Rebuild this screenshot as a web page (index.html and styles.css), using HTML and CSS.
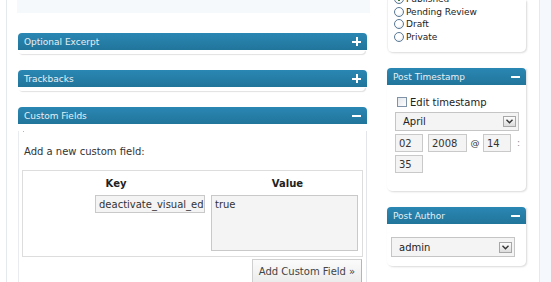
FILE: index.html
```html
<!doctype html>
<html lang="en">
    <head>
        <meta charset="UTF-8" />
        <meta name="viewport" content="width=device-width, initial-scale=1.0" />
        <title>Edit Post</title>
        <link rel="stylesheet" href="styles.css">
    </head>
    <body>
        <div class="page">
            <div class="wrap">
                <div class="main-col">
                    <div class="editor-tail"></div>

                    <div class="postbox closed">
                        <div class="hndle"><span>Optional Excerpt</span><span class="toggle plus"></span></div>
                        <div class="inside"></div>
                    </div>

                    <div class="postbox closed">
                        <div class="hndle"><span>Trackbacks</span><span class="toggle plus"></span></div>
                        <div class="inside"></div>
                    </div>

                    <div class="postbox open custom-fields">
                        <div class="hndle"><span>Custom Fields</span><span class="toggle minus"></span></div>
                        <div class="inside">
                            <div class="ajax-dot"></div>
                            <p class="add-title">Add a new custom field:</p>
                            <div class="newmeta">
                                <div class="meta-head">
                                    <span class="col-key">Key</span>
                                    <span class="col-value">Value</span>
                                </div>
                                <div class="meta-row">
                                    <div class="metakey">deactivate_visual_editor</div>
                                    <textarea class="metavalue">true</textarea>
                                </div>
                            </div>
                            <div class="submit-row">
                                <button class="button">Add Custom Field &raquo;</button>
                            </div>
                        </div>
                    </div>
                </div>

                <div class="side-col">
                    <div class="sidebox status-box">
                        <ul class="status-list">
                            <li><label><input type="radio" name="status" checked /> Published</label></li>
                            <li><label><input type="radio" name="status" /> Pending Review</label></li>
                            <li><label><input type="radio" name="status" /> Draft</label></li>
                            <li><label><input type="radio" name="status" /> Private</label></li>
                        </ul>
                    </div>

                    <div class="sidebox timestamp-box">
                        <div class="hndle"><span>Post Timestamp</span><span class="toggle minus"></span></div>
                        <div class="inside">
                            <label class="edit-ts"><input type="checkbox" /> Edit timestamp</label>
                            <div class="fake-select wide">
                                <span>April</span>
                                <span class="select-arrow"><svg width="7" height="5" viewBox="0 0 7 5"><path d="M0.5 0.8 L3.5 3.8 L6.5 0.8" fill="none" stroke="#333" stroke-width="1.4"/></svg></span>
                            </div>
                            <div class="ts-row">
                                <input class="ts-input" type="text" value="02" />
                                <input class="ts-input year" type="text" value="2008" />
                                <span class="ts-sep">@</span>
                                <input class="ts-input" type="text" value="14" />
                                <span class="ts-sep colon">:</span>
                            </div>
                            <div class="ts-row">
                                <input class="ts-input" type="text" value="35" />
                            </div>
                        </div>
                    </div>

                    <div class="sidebox author-box">
                        <div class="hndle"><span>Post Author</span><span class="toggle minus"></span></div>
                        <div class="inside">
                            <div class="fake-select">
                                <span>admin</span>
                                <span class="select-arrow"><svg width="7" height="5" viewBox="0 0 7 5"><path d="M0.5 0.8 L3.5 3.8 L6.5 0.8" fill="none" stroke="#333" stroke-width="1.4"/></svg></span>
                            </div>
                        </div>
                    </div>
                </div>
            </div>
            <div class="right-strip"></div>
        </div>
    </body>
</html>
```

FILE: styles.css
```css
body {
    font-family: "DejaVu Sans", Verdana, sans-serif;
    font-size: 10px;
    color: #333;
    margin: 0;
    padding: 0;
    background-color: #fff;
    overflow: hidden;
}

.page {
    display: flex;
    height: 282px;
    overflow: hidden;
}

.wrap {
    display: flex;
    width: 533px;
    margin-left: 6px;
    border-left: 1px solid #e4e9ee;
    padding-left: 11px;
    box-sizing: border-box;
}

.right-strip {
    flex: 1;
    border-left: 1px solid #e4e9ee;
    background-color: #f5f9fd;
}

/* main column */
.main-col {
    width: 349px;
}

.editor-tail {
    height: 13px;
    margin-left: -1px;
    width: 353px;
    background-color: #f5f9fc;
    margin-bottom: 20px;
}

.hndle {
    display: flex;
    align-items: center;
    justify-content: space-between;
    height: 17px;
    padding: 0 5px 0 6px;
    border-radius: 4px 4px 0 0;
    background: linear-gradient(#2a87b3, #21759b);
    color: #e6f0f6;
    font-size: 9px;
    box-sizing: border-box;
}

.toggle {
    position: relative;
    width: 9px;
    height: 9px;
    margin-right: 1px;
}

.toggle::before,
.toggle.plus::after {
    content: "";
    position: absolute;
    background-color: #fff;
}

.toggle::before {
    left: 0;
    top: 4px;
    width: 9px;
    height: 2px;
}

.toggle.plus::after {
    left: 4px;
    top: 0;
    width: 2px;
    height: 9px;
}

.postbox {
    margin-bottom: 16px;
}

.postbox.closed .inside {
    height: 4px;
    border-radius: 0 0 5px 5px;
    box-shadow: 1px 1px 1px rgba(0, 0, 0, 0.12);
    margin-right: 2px;
}

.postbox.closed + .postbox.open {
    margin-top: 1px;
}

.custom-fields .inside {
    border-left: 1px solid #e8ecef;
    border-right: 1px solid #e2e6ea;
    height: 200px;
    padding: 0 3px;
}

.ajax-dot {
    width: 1px;
    height: 1px;
    margin: 7px 0 0 1px;
    background-color: #b5b5b5;
}

.add-title {
    margin: 14px 0 0 2px;
    font-size: 10px;
    line-height: 12px;
    color: #333;
}

.newmeta {
    margin-top: 12px;
    border: 1px solid #dddddd;
    height: 87px;
    box-sizing: border-box;
}

.meta-head {
    display: flex;
    height: 24px;
    align-items: center;
    font-weight: bold;
    color: #222;
}

.col-key {
    width: 186px;
    text-align: center;
}

.col-value {
    flex: 1;
    text-align: center;
    padding-left: 4px;
}

.meta-row {
    display: flex;
    align-items: flex-start;
    padding-left: 72px;
}

.metakey,
.metavalue,
.ts-input {
    font-family: "DejaVu Sans", Verdana, sans-serif;
    font-size: 10px;
    line-height: 14px;
    color: #333;
    background-color: #f4f4f4;
    border: 1px solid #c9c9c9;
    box-sizing: border-box;
    margin: 0;
    outline: none;
}

.metakey {
    width: 110px;
    height: 18px;
    padding: 1px 3px;
    line-height: 15px;
    white-space: nowrap;
    overflow: hidden;
}

.metavalue {
    width: 147px;
    height: 56px;
    margin-left: 6px;
    padding: 2px 3px;
    resize: none;
}

.submit-row {
    display: flex;
    justify-content: flex-end;
    margin-top: 2px;
    padding-right: 1px;
}

.button {
    font-family: "DejaVu Sans", Verdana, sans-serif;
    font-size: 10px;
    color: #444;
    width: 110px;
    height: 24px;
    padding: 0;
    border: 1px solid #cfcfcf;
    border-right-color: #b5b5b5;
    border-bottom-color: #b5b5b5;
    background: linear-gradient(#fbfbfb, #ececec);
}

/* sidebar */
.side-col {
    width: 139px;
    margin-left: 20px;
}

.sidebox {
    border-radius: 0 0 5px 5px;
    box-shadow: 1px 1px 2px rgba(0, 0, 0, 0.15);
    margin-bottom: 16px;
}

.status-box {
    height: 52px;
    border-left: 1px solid #eef0f2;
    box-sizing: border-box;
}

.status-list {
    list-style: none;
    margin: 0;
    padding: 0 0 0 6px;
    position: relative;
    top: -7px;
}

.status-list li {
    height: 12.6px;
    line-height: 12px;
    font-size: 9px;
    color: #222;
}

.status-list label,
.edit-ts {
    display: flex;
    align-items: center;
}

input[type="radio"] {
    appearance: none;
    width: 10px;
    height: 10px;
    margin: 0 2px 0 0;
    border: 1px solid #5a7894;
    border-radius: 50%;
    background: radial-gradient(circle at 40% 35%, #fff 40%, #d8e2ea);
    box-sizing: border-box;
}

input[type="radio"]:checked {
    background: radial-gradient(circle, #3d7b2f 30%, #fff 35%, #dfe7ee);
}

input[type="checkbox"] {
    appearance: none;
    width: 10px;
    height: 10px;
    margin: 0 3px 0 0;
    border: 1px solid #7f93a8;
    background: linear-gradient(135deg, #e2e7ec, #fdfdfd);
    box-sizing: border-box;
}

.timestamp-box .inside {
    height: 106px;
    padding: 12px 0 0 8px;
    box-sizing: border-box;
}

.edit-ts {
    font-size: 10px;
    color: #222;
    margin-left: 2px;
    height: 10px;
}

.fake-select {
    display: flex;
    align-items: center;
    justify-content: space-between;
    width: 124px;
    height: 19px;
    margin-top: 5px;
    padding: 0 2px 0 7px;
    border: 1px solid #c5c5c5;
    background-color: #f4f4f4;
    box-sizing: border-box;
    color: #222;
}

.select-arrow {
    display: flex;
    align-items: center;
    justify-content: center;
    width: 13px;
    height: 11px;
    border: 1px solid #a7a7a7;
    background: linear-gradient(#fdfdfd, #dcdcdc);
    box-sizing: border-box;
}

.ts-row {
    display: flex;
    align-items: center;
    margin-top: 3px;
}

.ts-input {
    width: 28px;
    height: 18px;
    padding: 1px 3px;
}

.ts-input.year {
    width: 39px;
    margin-left: 5px;
}

.ts-sep {
    font-size: 9px;
    width: 16px;
    text-align: center;
    color: #333;
}

.ts-sep.colon {
    width: 9px;
    text-align: right;
    color: #888;
}

.author-box .inside {
    height: 42px;
    padding: 13px 0 0 4px;
    box-sizing: border-box;
}

.author-box .fake-select {
    margin-top: 0;
    height: 20px;
    font-size: 10px;
}
```
